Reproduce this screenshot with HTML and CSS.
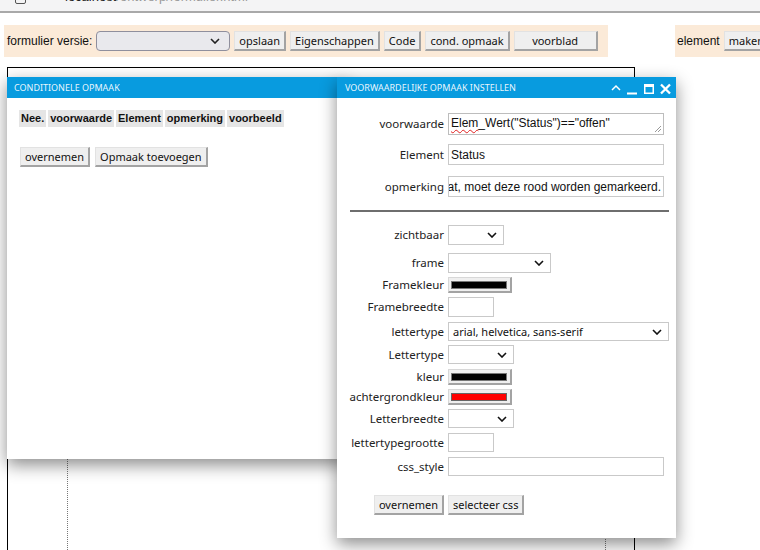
FILE: index.html
```html
<!DOCTYPE html>
<html lang="nl">
<head>
<meta charset="utf-8">
<title>Formulier ontwerp</title>
<link rel="stylesheet" href="styles.css">
</head>
<body>
<div class="chrome">
  <span class="chrome-box"></span>
  <span class="chrome-tick">&#10003;</span>
  <span class="chrome-url"><b>localhost</b>/ontwerp/formulier.html</span>
</div>

<div class="toolbar">
  <div class="tb-group tb-main">
    <span class="tb-label">formulier versie:</span>
    <div class="ff-select">
      <svg class="chev" width="10" height="6" viewBox="0 0 10 6"><path d="M1 1 L5 5 L9 1" fill="none" stroke="#222" stroke-width="1.6"/></svg>
    </div>
    <button class="btn">opslaan</button>
    <button class="btn">Eigenschappen</button>
    <button class="btn">Code</button>
    <button class="btn">cond. opmaak</button>
    <button class="btn btn-wide">voorblad</button>
  </div>
  <div class="tb-group tb-side">
    <span class="tb-label">element</span>
    <button class="btn">maken</button>
  </div>
</div>

<div class="canvas">
  <div class="page"></div>
</div>

<div class="dialog d1">
  <div class="dlg-title"><span>CONDITIONELE OPMAAK</span></div>
  <div class="d1-body">
    <div class="hdr-row">
      <span class="hdr">Nee.</span>
      <span class="hdr">voorwaarde</span>
      <span class="hdr">Element</span>
      <span class="hdr">opmerking</span>
      <span class="hdr">voorbeeld</span>
    </div>
    <div class="d1-actions">
      <button class="btn">overnemen</button>
      <button class="btn">Opmaak toevoegen</button>
    </div>
  </div>
</div>

<div class="dialog d2">
  <div class="dlg-title">
    <span>VOORWAARDELIJKE OPMAAK INSTELLEN</span>
    <svg class="dlg-icons" width="66" height="21" viewBox="0 0 66 21">
      <path d="M6 13 L10 9 L14 13" fill="none" stroke="#fff" stroke-width="1.5"/>
      <rect x="21" y="15.5" width="10" height="2" fill="#fff"/>
      <rect x="38.75" y="7.75" width="8.5" height="8.5" fill="none" stroke="#fff" stroke-width="1.5"/>
      <rect x="38" y="7" width="10" height="3" fill="#fff"/>
      <path d="M55 7.5 L64 16.5 M64 7.5 L55 16.5" stroke="#fff" stroke-width="2.3"/>
    </svg>
  </div>
  <div class="d2-body">
    <div class="frow r-first">
      <span class="flabel">voorwaarde</span>
      <div class="ctl ta"><span class="err">Elem</span>_Wert("Status")=="offen"
        <svg class="grip" width="9" height="9" viewBox="0 0 9 9"><path d="M8 2 L2 8 M8 5 L5 8" stroke="#999" stroke-width="1"/></svg>
      </div>
    </div>
    <div class="frow r-9">
      <span class="flabel">Element</span>
      <div class="ctl txt wide">Status</div>
    </div>
    <div class="frow r-11">
      <span class="flabel">opmerking</span>
      <div class="ctl txt wide scrolled"><span>at, moet deze rood worden gemarkeerd.</span></div>
    </div>
    <div class="sep"></div>
    <div class="frow r-13">
      <span class="flabel">zichtbaar</span>
      <div class="ctl sel s-56"><svg class="chev" width="10" height="6" viewBox="0 0 10 6"><path d="M1 1 L5 5 L9 1" fill="none" stroke="#111" stroke-width="1.6"/></svg></div>
    </div>
    <div class="frow r-8">
      <span class="flabel">frame</span>
      <div class="ctl sel s-103"><svg class="chev" width="10" height="6" viewBox="0 0 10 6"><path d="M1 1 L5 5 L9 1" fill="none" stroke="#111" stroke-width="1.6"/></svg></div>
    </div>
    <div class="frow r-4">
      <span class="flabel">Framekleur</span>
      <div class="ctl color"><span class="swatch"></span></div>
    </div>
    <div class="frow r-4">
      <span class="flabel">Framebreedte</span>
      <div class="ctl txt narrow"></div>
    </div>
    <div class="frow r-5">
      <span class="flabel">lettertype</span>
      <div class="ctl sel s-221 h19"><span class="sel-text">arial, helvetica, sans-serif</span><svg class="chev" width="10" height="6" viewBox="0 0 10 6"><path d="M1 1 L5 5 L9 1" fill="none" stroke="#111" stroke-width="1.6"/></svg></div>
    </div>
    <div class="frow r-4">
      <span class="flabel">Lettertype</span>
      <div class="ctl sel s-66 h19"><svg class="chev" width="10" height="6" viewBox="0 0 10 6"><path d="M1 1 L5 5 L9 1" fill="none" stroke="#111" stroke-width="1.6"/></svg></div>
    </div>
    <div class="frow r-5">
      <span class="flabel">kleur</span>
      <div class="ctl color"><span class="swatch"></span></div>
    </div>
    <div class="frow r-4">
      <span class="flabel">achtergrondkleur</span>
      <div class="ctl color"><span class="swatch red"></span></div>
    </div>
    <div class="frow r-4">
      <span class="flabel">Letterbreedte</span>
      <div class="ctl sel s-66 h19"><svg class="chev" width="10" height="6" viewBox="0 0 10 6"><path d="M1 1 L5 5 L9 1" fill="none" stroke="#111" stroke-width="1.6"/></svg></div>
    </div>
    <div class="frow r-5">
      <span class="flabel">lettertypegrootte</span>
      <div class="ctl txt narrow h19"></div>
    </div>
    <div class="frow r-5">
      <span class="flabel">css_style</span>
      <div class="ctl txt wide h19"></div>
    </div>
    <div class="frow r-19">
      <span class="flabel"><button class="btn">overnemen</button></span>
      <button class="btn">selecteer css</button>
    </div>
  </div>
</div>
</body>
</html>
```

FILE: styles.css
```css
* { box-sizing: border-box; }

html, body {
  margin: 0;
  padding: 0;
  background: #fff;
  width: 760px;
  height: 550px;
  overflow: hidden;
  font-family: "Noto Sans", "Open Sans", sans-serif;
  color: #1a1a1a;
}

body { position: relative; }

/* browser chrome remnant */
.chrome {
  height: 13px;
  background: #f4f4f5;
  border-bottom: 2px solid #a9a9a9;
  overflow: hidden;
  display: flex;
  align-items: flex-start;
  font-family: "Liberation Sans", sans-serif;
  font-size: 13px;
}
.chrome-box {
  width: 11px;
  height: 14px;
  margin: -10px 0 0 15px;
  border: 1.5px solid #555;
  border-radius: 2px;
}
.chrome-tick {
  margin: -9px 0 0 16px;
  color: #444;
  font-size: 11px;
}
.chrome-url {
  margin: -10px 0 0 14px;
  color: #999;
  line-height: 14px;
}
.chrome-url b { color: #222; font-weight: normal; }

/* toolbar */
.toolbar {
  display: flex;
  margin-top: 12px;
  height: 32px;
}
.tb-group {
  background: #fbead8;
  display: flex;
  align-items: center;
  gap: 4px;
  height: 32px;
}
.tb-main {
  margin-left: 4px;
  width: 604px;
  padding-left: 3px;
}
.tb-side {
  margin-left: 67px;
  padding-left: 2px;
  flex: 1;
  overflow: hidden;
}
.tb-label {
  font-family: "Liberation Sans", Arial, sans-serif;
  font-size: 12px;
  color: #111;
}
.ff-select {
  width: 134px;
  height: 20px;
  background: #e9e9ed;
  border: 1px solid #8f8f9d;
  border-radius: 4px;
  display: flex;
  align-items: center;
  justify-content: flex-end;
  padding-right: 9px;
}

.btn {
  font-family: "Noto Sans", "Open Sans", sans-serif;
  font-size: 11px;
  color: #111;
  height: 20px;
  padding: 0 4px;
  margin: 0;
  line-height: 16px;
  background: #efefef;
  border-top: 1px solid #e2e2e2;
  border-left: 1px solid #e2e2e2;
  border-right: 2px solid #a3a3a3;
  border-bottom: 2px solid #a3a3a3;
  border-radius: 0;
  white-space: nowrap;
}
.btn-wide { width: 84px; }

/* design canvas */
.canvas {
  margin: 10px 0 0 7px;
  width: 628px;
  height: 483px;
  border: 1px solid #000;
  border-bottom: 0;
  padding-top: 30px;
}
.page {
  margin-left: 59px;
  width: 539px;
  height: 100%;
  border-left: 1px dotted #777;
  border-right: 1px dotted #777;
}

/* dialogs (floating windows) */
.dialog {
  position: absolute;
  top: 77px;
  background: #fff;
  box-shadow: 0 6px 16px rgba(0, 0, 0, 0.45);
}
.d1 {
  left: 7px;
  width: 340px;
  height: 382px;
}
.d2 {
  left: 337px;
  width: 339px;
  height: 461px;
}
.dlg-title {
  height: 21px;
  background: #089bdf;
  color: rgba(255, 255, 255, 0.92);
  font-size: 9px;
  display: flex;
  align-items: center;
  padding-left: 7px;
}
.d2 .dlg-title { padding-left: 8px; }
.dlg-icons {
  margin-left: auto;
  margin-right: 4px;
}

.d1-body {
  padding: 12px 0 0 12px;
}
.hdr-row {
  display: flex;
  gap: 2px;
}
.hdr {
  background: #e5e5e5;
  font-family: "Liberation Sans", Arial, sans-serif;
  font-weight: bold;
  font-size: 11px;
  color: #111;
  height: 17px;
  line-height: 17px;
  padding: 0 2px;
}
.d1-actions {
  display: flex;
  gap: 5px;
  margin: 20px 0 0 1px;
}

/* form */
.d2-body {
  display: flex;
  flex-direction: column;
  padding-top: 15px;
}
.frow {
  display: flex;
  align-items: center;
  gap: 4px;
}
.flabel {
  width: 107px;
  text-align: right;
  font-size: 11.5px;
  color: #222;
  line-height: 16px;
  display: flex;
  justify-content: flex-end;
}
.r-4 { margin-top: 4px; }
.r-5 { margin-top: 5px; }
.r-8 { margin-top: 8px; }
.r-9 { margin-top: 9px; }
.r-11 { margin-top: 11px; }
.r-13 { margin-top: 13px; }
.r-19 { margin-top: 19px; }

.sep {
  margin: 13px 7px 0 13px;
  height: 2px;
  background: #6e6e6e;
}

.ctl {
  border: 1px solid #c9c9c9;
  background: #fff;
  height: 20px;
  font-family: "Liberation Sans", Arial, sans-serif;
  font-size: 12px;
  color: #111;
  display: flex;
  align-items: center;
  white-space: nowrap;
  overflow: hidden;
  position: relative;
}
.ta {
  width: 216px;
  height: 22px;
  padding-left: 2px;
  align-items: flex-start;
  padding-top: 2px;
  border-color: #bdbdbd;
}
.err {
  text-decoration: underline wavy #e02020;
  text-decoration-thickness: 1px;
  text-underline-offset: 2px;
}
.grip {
  position: absolute;
  right: 1px;
  bottom: 1px;
}
.txt { padding-left: 2px; }
.wide { width: 216px; height: 21px; }
.wide.h19 { height: 19px; }
.narrow { width: 46px; }
.h19 { height: 19px; }
.scrolled {
  justify-content: flex-end;
  padding-right: 2px;
}

.sel {
  justify-content: flex-end;
  padding-right: 6px;
  font-family: "Noto Sans", "Open Sans", sans-serif;
  font-size: 11px;
}
.s-56 { width: 56px; }
.s-103 { width: 103px; }
.s-66 { width: 66px; }
.s-221 { width: 221px; }
.sel-text {
  margin-right: auto;
  padding-left: 4px;
  color: #111;
}

.color {
  width: 64px;
  height: 16px;
  background: #efefef;
  border-top: 1px solid #d8d8d8;
  border-left: 1px solid #d8d8d8;
  border-right: 2px solid #a3a3a3;
  border-bottom: 2px solid #a3a3a3;
  justify-content: center;
  padding-right: 1px;
}
.swatch {
  width: 56px;
  height: 8px;
  background: #000;
  border: 1px solid #777;
}
.swatch.red { background: #ff0000; border-color: #666; }
```
